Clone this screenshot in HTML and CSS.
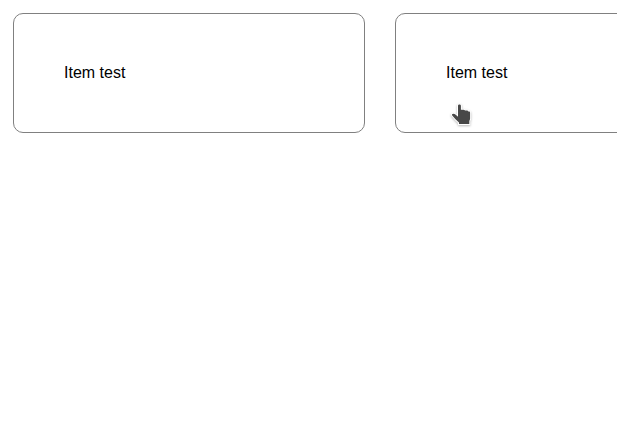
FILE: index.html
```html
<!DOCTYPE html>
<html lang="en">
<head>
<meta charset="utf-8">
<title>Items</title>
<link rel="stylesheet" href="styles.css">
</head>
<body>
<div class="list">
  <div class="item">Item test</div>
  <div class="item">Item test</div>
</div>
<svg class="cursor" width="28" height="30" viewBox="0 0 28 30">
  <path d="M10 5.8C10 4 12.9 4 12.9 5.8V9.7H15.5C16.3 9.7 16.7 10 17 10.5H19C19.7 10.5 20.1 10.9 20.3 11.5H21C21.7 11.5 22.1 12 22.1 12.8V18.5C22.1 19.8 21.3 20.5 21.3 21.5V24H11V22.6L7.5 19.3C6.5 18 5.5 16.5 4.2 15.4C3.6 14.6 4.2 13.8 5.3 13.8C7 13.8 8.6 15.5 10 16.8Z"/>
</svg>
</body>
</html>
```
FILE: styles.css
```css
body {
  margin: 0;
  padding: 13px;
  overflow: hidden;
  background: #fff;
  color: #000;
  font: 16px "Liberation Sans", Arial, sans-serif;
}

.list {
  display: flex;
  gap: 30px;
}

.item {
  flex: 0 0 352px;
  box-sizing: border-box;
  height: 120px;
  padding: 50px;
  border: 1px solid gray;
  border-radius: 10px;
}

.cursor {
  position: absolute;
  left: 448px;
  top: 100px;
  fill: #484848;
  stroke: #fff;
  stroke-width: 2;
  paint-order: stroke;
  filter: drop-shadow(0 1px 1px rgba(0, 0, 0, 0.28));
}
```
